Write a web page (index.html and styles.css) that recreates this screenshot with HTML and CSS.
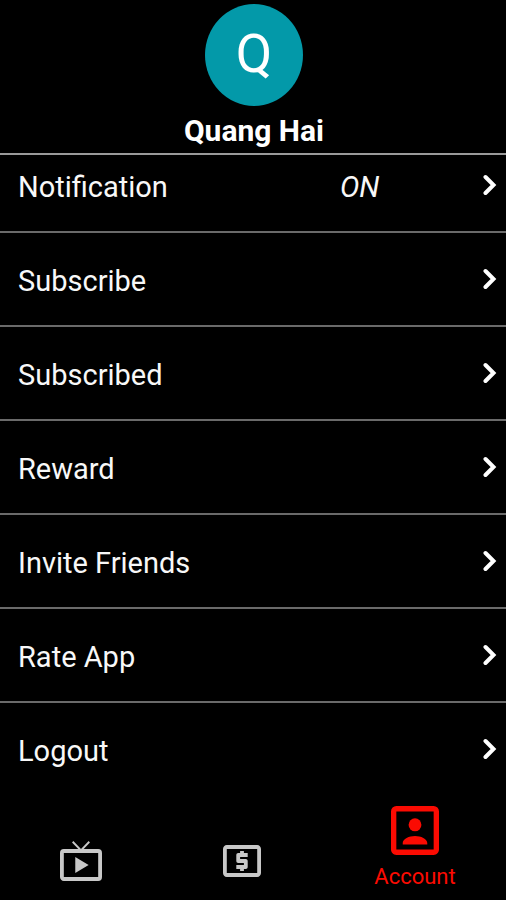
FILE: index.html
```html
<!DOCTYPE html>
<html lang="en">
<head>
<meta charset="utf-8">
<meta name="viewport" content="width=device-width, initial-scale=1">
<title>Account</title>
<link rel="stylesheet" href="styles.css">
</head>
<body>
<svg class="defs" aria-hidden="true">
  <symbol id="chevron" viewBox="0 0 14 22"><path d="M2.500 3l8 8-8 8" fill="none" stroke="currentColor" stroke-width="4" stroke-linecap="round"/></symbol>
</svg>
<header class="profile">
  <div class="avatar">Q</div>
  <h1 class="name">Quang Hai</h1>
</header>
<main class="menu">
  <button class="row" type="button"><span class="label">Notification</span><em class="label">ON</em><svg class="chevron"><use href="#chevron"/></svg></button>
  <button class="row" type="button"><span class="label">Subscribe</span><svg class="chevron"><use href="#chevron"/></svg></button>
  <button class="row" type="button"><span class="label">Subscribed</span><svg class="chevron"><use href="#chevron"/></svg></button>
  <button class="row" type="button"><span class="label">Reward</span><svg class="chevron"><use href="#chevron"/></svg></button>
  <button class="row" type="button"><span class="label">Invite Friends</span><svg class="chevron"><use href="#chevron"/></svg></button>
  <button class="row" type="button"><span class="label">Rate App</span><svg class="chevron"><use href="#chevron"/></svg></button>
  <button class="row" type="button"><span class="label">Logout</span><svg class="chevron"><use href="#chevron"/></svg></button>
</main>
<nav class="tabs">
  <a class="tab" href="#tv" aria-label="TV">
    <svg class="icon-tv" viewBox="1 2 22 20" preserveAspectRatio="none"><path fill="currentColor" d="M21 6h-7.59l3.29-3.29L16 2l-4 4-4-4-.71.71L10.59 6H3a2 2 0 0 0-2 2v12c0 1.1.9 2 2 2h18a2 2 0 0 0 2-2V8a2 2 0 0 0-2-2zm0 14H3V8h18v12zM9 10v8l7-4z"/></svg>
  </a>
  <a class="tab" href="#pay" aria-label="Payments">
    <svg class="icon-pay" viewBox="2 4 20 16" preserveAspectRatio="none"><path fill="currentColor" d="M11 17h2v-1h1c.55 0 1-.45 1-1v-3c0-.55-.45-1-1-1h-3v-1h4V8h-2V7h-2v1h-1c-.55 0-1 .45-1 1v3c0 .55.45 1 1 1h3v1H9v2h2v1zm9-13H4c-1.11 0-2 .89-2 2v12c0 1.11.89 2 2 2h16c1.11 0 2-.89 2-2V6c0-1.11-.89-2-2-2zm0 14H4V6h16v12z"/></svg>
  </a>
  <a class="tab active" href="#account" aria-current="page">
    <svg class="icon-account" viewBox="3 3 18 18" preserveAspectRatio="none"><path fill="currentColor" d="M19 5v14H5V5h14m0-2H5a2 2 0 0 0-2 2v14c0 1.1.9 2 2 2h14c1.1 0 2-.9 2-2V5a2 2 0 0 0-2-2zM7.4 17.1v-.5c0-1.600 2.400-2.600 4.600-2.600s4.600 1 4.600 2.600v.5z"/><circle cx="12" cy="9.900" r="2.400" fill="currentColor"/></svg>
    <span>Account</span>
  </a>
</nav>
</body>
</html>
```
FILE: styles.css
```css
* { box-sizing: border-box; }

body {
  margin: 0;
  min-height: 100vh;
  display: flex;
  flex-direction: column;
  background: #000;
  color: #f8f8f8;
  font-family: Roboto, sans-serif;
}

.defs { display: none; }

.profile {
  display: flex;
  flex-direction: column;
  align-items: center;
  gap: 8px;
  padding: 4px 0 5px 2px;
  border-bottom: 2px solid #999;
}

.avatar {
  width: 98px;
  height: 102px;
  border-radius: 50%;
  background: #0399a9;
  color: #fff;
  font-size: 53px;
  line-height: 100px;
  text-align: center;
}

.name {
  margin: 0;
  color: #fff;
  font-size: 30px;
  font-weight: 700;
  line-height: 34px;
}

.menu { display: flex; flex-direction: column; }

.row {
  display: grid;
  grid-template-columns: 9fr 4fr 14px;
  align-items: center;
  padding: 26px 9px 26px 18px;
  border: 0;
  border-bottom: 2px solid #6a6a6a;
  background: none;
  color: inherit;
  font: inherit;
  font-size: 29px;
  line-height: 36px;
  text-align: left;
}

.row:first-child { padding-top: 10px; }
.row:last-child { border-bottom: 0; }

.label { padding-top: 4px; }

.chevron {
  grid-column: 3;
  width: 14px;
  height: 22px;
  color: #fff;
}

.tabs {
  display: grid;
  grid-template-columns: 7fr 7fr 8fr;
  align-items: end;
  margin-top: auto;
  padding-bottom: 9px;
}

.tab {
  display: flex;
  flex-direction: column;
  align-items: center;
  gap: 8px;
  padding-bottom: 10px;
  color: #c8c8c8;
  font-size: 22px;
  line-height: 28px;
  text-decoration: none;
}

.tab.active { padding: 0 0 0 2px; color: #fb0b02; }

.icon-tv { width: 42px; height: 40px; }
.icon-pay { width: 38px; height: 32px; margin-bottom: 4px; }
.icon-account { width: 48px; height: 49px; }
```
